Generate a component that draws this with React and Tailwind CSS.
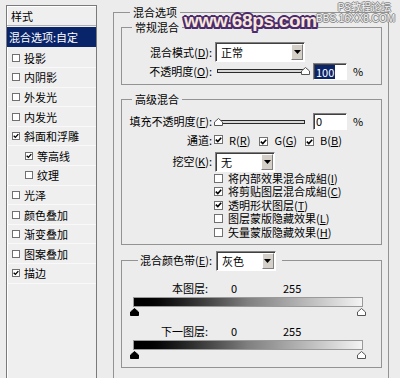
import React from "react";

function Check({ on, size = "h-[9px] w-[9px]" }) {
  return (
    <span className={`inline-flex shrink-0 items-center justify-center border border-[#707070] bg-white ${size}`}>
      {on && (
        <svg width="7" height="6" viewBox="0 0 7 6">
          <path d="M0.8 2.6 L2.8 4.6 L6.2 0.8" stroke="#000" strokeWidth="1.6" fill="none" />
        </svg>
      )}
    </span>
  );
}

function Select({ value, width }) {
  return (
    <div className={`flex h-[20px] items-stretch border border-t-[#808080] border-l-[#808080] border-b-white border-r-white bg-white shadow-[inset_1px_1px_0_#404040] ${width}`}>
      <span className="flex-1 pl-[5px] leading-[18px]">{value}</span>
      <span className="m-[1px] flex w-[12px] items-center justify-center border border-t-white border-l-white border-b-[#808080] border-r-[#808080] bg-[#d4d0c8]">
        <svg width="7" height="4" viewBox="0 0 7 4">
          <path d="M0 0H7L3.5 4Z" fill="#000" />
        </svg>
      </span>
    </div>
  );
}

function Thumb({ dark }) {
  return (
    <svg width="9" height="8" viewBox="0 0 9 8">
      <path
        d="M4.5 0.5 L8.5 4 V7.5 H0.5 V4 Z"
        fill={dark ? "#000" : "#fff"}
        stroke={dark ? "#000" : "#555"}
        strokeWidth="1"
      />
    </svg>
  );
}

function Slider({ atEnd }) {
  return (
    <div className="relative ml-[2px] h-[12px] w-[96px]">
      <div className="absolute left-[3px] right-[5px] top-[4px] h-[4px] border border-[#2a2a2a] bg-[#d8d8d8]" />
      <span className={`absolute top-[2px] ${atEnd ? "right-0" : "left-0"}`}>
        <Thumb />
      </span>
    </div>
  );
}

function Legend({ children, className = "" }) {
  return <legend className={`ml-[10px] px-[3px] leading-[15px] ${className}`}>{children}</legend>;
}

function Field({ value, selected }) {
  return (
    <div className="ml-[3px] h-[17px] w-[34px] border border-t-[#808080] border-l-[#808080] border-b-white border-r-white bg-white pl-[1px] shadow-[inset_1px_1px_0_#404040]">
      <span className={`inline-block px-[1px] leading-[14px] ${selected ? "bg-[#0a246a] text-white" : ""}`}>{value}</span>
    </div>
  );
}

const styles = [
  { name: "投影" },
  { name: "内阴影" },
  { name: "外发光" },
  { name: "内发光" },
  { name: "斜面和浮雕", on: true },
  { name: "等高线", on: true, sub: true },
  { name: "纹理", sub: true },
  { name: "光泽" },
  { name: "颜色叠加" },
  { name: "渐变叠加" },
  { name: "图案叠加" },
  { name: "描边", on: true },
];

const options = [
  { label: "将内部效果混合成組", key: "I" },
  { label: "将剪贴图层混合成組", key: "C", on: true },
  { label: "透明形状图层", key: "T", on: true },
  { label: "图层蒙版隐藏效果", key: "L" },
  { label: "矢量蒙版隐藏效果", key: "H" },
];

function Band({ label }) {
  return (
    <>
      <div className="mt-[9px] flex h-[14px] items-center leading-[14px]">
        <span className="w-[86px] text-right">{label}:</span>
        <span className="ml-[23px] w-[52px]">0</span>
        <span>255</span>
      </div>
      <div className="ml-[11px] mt-[2px] h-[10px] w-[230px] border border-[#9a9a9a] bg-linear-to-r from-black via-[#808080] to-[#f4f4f4]" />
      <div className="ml-[8px] mt-[1px] flex h-[7px] w-[236px] items-start justify-between">
        <Thumb dark />
        <Thumb />
      </div>
    </>
  );
}

export default function App() {
  return (
    <div className="relative flex h-[378px] w-[400px] items-start overflow-hidden bg-[#ececec] font-['Noto_Sans_CJK_SC','Noto_Sans',sans-serif] text-[11px] text-black">
      <div className="ml-[6px] mt-[5px] h-[400px] w-[91px] shrink-0 border border-[#7a7a7a] bg-[#efefef] shadow-[inset_1px_1px_0_#fff]">
        <div className="h-[20px] border-b border-[#b0b0b0] pl-[4px] leading-[20px]">样式</div>
        <div className="mt-[1px] h-[20px] bg-[#0a246a] pl-[2px] leading-[20px] text-white">混合选项:自定</div>
        <div className="mt-[1.5px]">
          {styles.map((s) => (
            <div
              key={s.name}
              className={`flex h-[19.6px] items-center gap-[4px] border-b border-[#f9f9f9] leading-[16px] ${s.sub ? "pl-[18px]" : "pl-[5px]"}`}
            >
              <Check on={s.on} size="h-[8px] w-[8px]" />
              <span>{s.name}</span>
            </div>
          ))}
        </div>
      </div>

      <fieldset className="ml-[16px] mt-[5px] w-[276px] shrink-0 border border-[#939393] pb-[30px] pl-[7px] pr-[6px]">
        <legend className="ml-[9px] px-[3px] leading-[15px]">混合选项</legend>

        <fieldset className="border border-[#939393] pb-[4px]">
          <Legend>常规混合</Legend>
          <div className="mt-[7px] flex h-[20px] items-center">
            <span className="w-[90px] text-right">混合模式(<u>D</u>):</span>
            <span className="ml-[3px]">
              <Select value="正常" width="w-[90px]" />
            </span>
          </div>
          <div className="flex h-[18px] items-center leading-[16px]">
            <span className="w-[90px] text-right">不透明度(<u>O</u>):</span>
            <Slider atEnd />
            <Field value="100" selected />
            <span className="ml-[6px]">%</span>
          </div>
        </fieldset>

        <fieldset className="mt-[7px] border border-[#939393] pb-[5px]">
          <Legend>高级混合</Legend>
          <div className="mt-[6px] flex h-[17px] items-center leading-[15px]">
            <span className="w-[90px] text-right">填充不透明度(<u>F</u>):</span>
            <Slider />
            <Field value="0" />
            <span className="ml-[6px]">%</span>
          </div>
          <div className="mt-[2.5px] flex h-[14px] items-center leading-[14px]">
            <span className="w-[92px] pr-[2px] text-right">通道:</span>
            <Check on />
            <span className="ml-[6px]">R(<u>R</u>)</span>
            <span className="ml-[9px]">
              <Check on />
            </span>
            <span className="ml-[6px]">G(<u>G</u>)</span>
            <span className="ml-[8px]">
              <Check on />
            </span>
            <span className="ml-[6px]">B(<u>B</u>)</span>
          </div>
          <div className="mt-[5px] flex h-[20px] items-center">
            <span className="w-[90px] text-right">挖空(<u>K</u>):</span>
            <span className="ml-[3px]">
              <Select value="无" width="w-[60px]" />
            </span>
          </div>
          <div className="ml-[92px]">
            {options.map((o) => (
              <div key={o.key} className="flex h-[13.5px] items-center gap-[5px] leading-[13px]">
                <Check on={o.on} />
                <span>
                  {o.label}(<u>{o.key}</u>)
                </span>
              </div>
            ))}
          </div>
        </fieldset>

        <fieldset className="mt-[4.5px] border border-[#939393] pb-[9px]">
          <legend className="ml-[16px] px-[2px]">
            <div className="flex h-[22px] items-center pr-[4px]">
              <span>混合颜色带(<u>E</u>):</span>
              <span className="ml-[4px]">
                <Select value="灰色" width="w-[60px]" />
              </span>
            </div>
          </legend>
          <Band label="本图层" />
          <Band label="下一图层" />
        </fieldset>
      </fieldset>

      <div className="absolute left-[184px] top-[9px] font-['Liberation_Sans',sans-serif] text-[19px] font-bold leading-[24px] tracking-[-0.3px] text-[#f7e6da] [text-shadow:2px_0_0_#4b2a6e,-2px_0_0_#4b2a6e,0_2px_0_#4b2a6e,0_-2px_0_#4b2a6e,1.5px_1.5px_0_#4b2a6e,-1.5px_-1.5px_0_#4b2a6e,1.5px_-1.5px_0_#4b2a6e,-1.5px_1.5px_0_#4b2a6e]">
        www.68ps.com
      </div>
      <div className="absolute right-[5px] top-[2px] flex flex-col items-end font-['Liberation_Sans','Noto_Sans_CJK_SC',sans-serif] text-[10px] leading-[11px] text-[#f2f2f2] [text-shadow:1px_0_0_#8a8a8a,-1px_0_0_#8a8a8a,0_1px_0_#8a8a8a,0_-1px_0_#8a8a8a]">
        <span className="pr-[4px]">PS教程论坛</span>
        <span>BBS.16XX8.COM</span>
      </div>
    </div>
  );
}
